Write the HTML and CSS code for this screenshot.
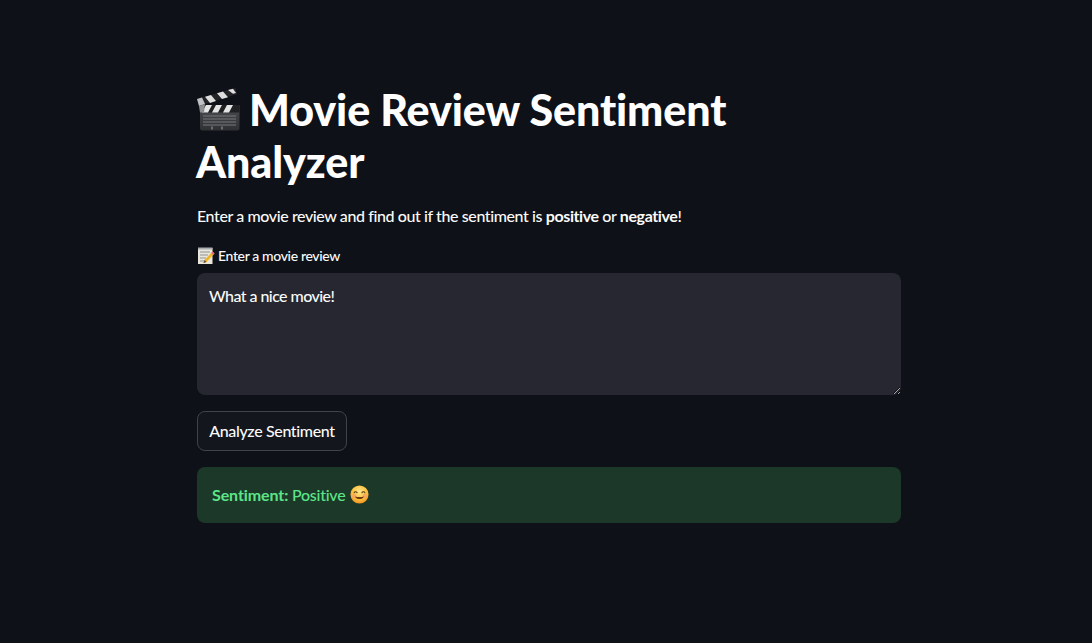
FILE: index.html
```html
<html>
<head>
<title>Movie Review Sentiment Analyzer</title>
<meta name="viewport" content="width=device-width, initial-scale=1"/>
<link rel="stylesheet" href="styles.css">
</head>

<body>
<div class="main">

  <h1 class="title">
    <svg class="clapper" viewBox="0 0 44 44" aria-hidden="true">
      <defs>
        <linearGradient id="board" x1="0" y1="0" x2="0" y2="1">
          <stop offset="0" stop-color="#4c4e52"/>
          <stop offset="1" stop-color="#2f3033"/>
        </linearGradient>
      </defs>
      <path d="M4 17h39.500v23a2.500 2.500 0 0 1-2.500 2.500H6.500A2.500 2.500 0 0 1 4 40z" fill="url(#board)"/>
      <path d="M4 17h39.500v7.500H4z" fill="#1f2023"/>
      <path d="M10 17h6l-4 7.500H6zM20 17h6l-4 7.500h-6zM31 17h6l-4 7.500h-6z" fill="#e4e4e4"/>
      <path d="M7 28h33M7 31h33M7 34h33M7 37h33" stroke="#77797d" stroke-width="1"/>
      <path d="M16 38.500v3M26 38.500v3" stroke="#a5a7aa" stroke-width="1"/>
      <path d="M1 11 39.500 0l1.500 6L3 18z" fill="#232427"/>
      <path d="M9 8.700l6-1.700 5 6-6 1.900zM21 5.300l6-1.700 5 5.600-6 1.900zM32 2.100l5-1.400 3 4.200-3 .9z" fill="#dedede"/>
      <path d="M1 11l5-1.500 3 6.500-6 2z" fill="#bfc1c4"/>
      <path d="M3 18l6-2-1 8.500H4z" fill="#8d8f93"/>
    </svg>
    Movie Review Sentiment Analyzer
  </h1>

  <p class="intro">Enter a movie review and find out if the sentiment is <b>positive</b> or <b>negative</b>!</p>

  <label class="field-label" for="review">
    <svg class="memo" viewBox="0 0 18 18" aria-hidden="true">
      <path d="M1 1h14.500v16H1z" fill="#e9e6dc"/>
      <path d="M1 0.500h14.500V2.500H1z" fill="#a9adb0"/>
      <path d="M3 5h10M3 8h8M3 11h6M3 14h5" stroke="#8f9398" stroke-width="1"/>
      <path d="M15.500 4.500l2 2-8 8.500-3 1 1-3z" fill="#f0b429"/>
      <path d="M15.500 4.500l2 2-1.300 1.400-2-2z" fill="#e8627c"/>
      <path d="M7.500 13l2 2-3 1z" fill="#5b4a3a"/>
    </svg>
    Enter a movie review
  </label>
  <div class="textbox">
    <textarea id="review" class="review-input">What a nice movie!</textarea>
  </div>

  <button class="btn" type="button">Analyze Sentiment</button>

  <div class="alert-success">
    <span><b>Sentiment:</b> Positive</span>
    <svg class="smile" viewBox="0 0 20 20" aria-hidden="true">
      <defs>
        <radialGradient id="face" cx="0.5" cy="0.35" r="0.7">
          <stop offset="0" stop-color="#fde68a"/>
          <stop offset="0.6" stop-color="#fbbf3c"/>
          <stop offset="1" stop-color="#ee8a1c"/>
        </radialGradient>
      </defs>
      <circle cx="10" cy="10" r="9.500" fill="url(#face)"/>
      <circle cx="4.500" cy="11.500" r="2.300" fill="#f59a6a" opacity=".7"/>
      <circle cx="15.500" cy="11.500" r="2.300" fill="#f59a6a" opacity=".7"/>
      <path d="M4.300 8.200c.6-1.600 2.600-1.600 3.200 0M12.500 8.200c.6-1.600 2.600-1.600 3.200 0" fill="none" stroke="#5b3a12" stroke-width="1.100" stroke-linecap="round"/>
      <path d="M5.200 12c1.300 3.600 8.300 3.600 9.600 0-3 .9-6.600 .9-9.600 0z" fill="#6b3a12"/>
    </svg>
  </div>

</div>
</body>
</html>
```

FILE: styles.css
```css
html, body {margin:0; padding:0; height:100%; width:100%;}
body {
 color: #fafafa;
 background: #0e1117;
 font: 500 16px/24px Lato, "Noto Sans", sans-serif;
 font-variant-ligatures: none;
}

.main {
 width: 704px;
 margin-left: 197px;
 padding-top: 84px;
 display: flex;
 flex-direction: column;
 align-items: flex-start;
}

.title {
 width: 600px;
 margin: 0 0 16px -1px;
 font-size: 43px;
 line-height: 52px;
 font-weight: 900;
 letter-spacing: -0.1px;
 color: #fff;
}
.clapper {
 width: 44px;
 height: 44px;
 vertical-align: -6px;
 margin-right: -1px;
}

.intro {
 margin: 0 0 16px;
 letter-spacing: -0.4px;
}
.intro b {font-weight: 700;}

.field-label {
 display: flex;
 align-items: center;
 gap: 3px;
 height: 24px;
 margin-bottom: 5px;
 font-size: 14px;
 line-height: 24px;
 letter-spacing: -0.36px;
}
.memo {width: 18px; height: 18px;}

.textbox {
 width: 100%;
 height: 122px;
 margin-bottom: 16px;
}
.review-input {
 display: block;
 box-sizing: border-box;
 width: 100%;
 height: 100%;
 margin: 0;
 border: 0;
 border-radius: 8px;
 padding: 11px 12px;
 background: #262730;
 color: #fafafa;
 font: inherit;
 font-variant-ligatures: none;
 letter-spacing: -0.55px;
 resize: vertical;
 outline: none;
}

.btn {
 width: 150px;
 height: 40px;
 padding: 0;
 margin-bottom: 16px;
 border: 1px solid #41434c;
 border-radius: 8px;
 background: #13161d;
 color: #fafafa;
 font: inherit;
 font-variant-ligatures: none;
 letter-spacing: -0.35px;
}

.alert-success {
 box-sizing: border-box;
 display: flex;
 align-items: center;
 gap: 5px;
 width: 100%;
 height: 56px;
 padding: 0 15px 1px;
 border-radius: 8px;
 background: #1c3829;
 color: #5ce488;
 letter-spacing: -0.25px;
}
.alert-success b {font-weight: 700; letter-spacing: -0.1px;}
.smile {width: 19px; height: 19px;}
```
